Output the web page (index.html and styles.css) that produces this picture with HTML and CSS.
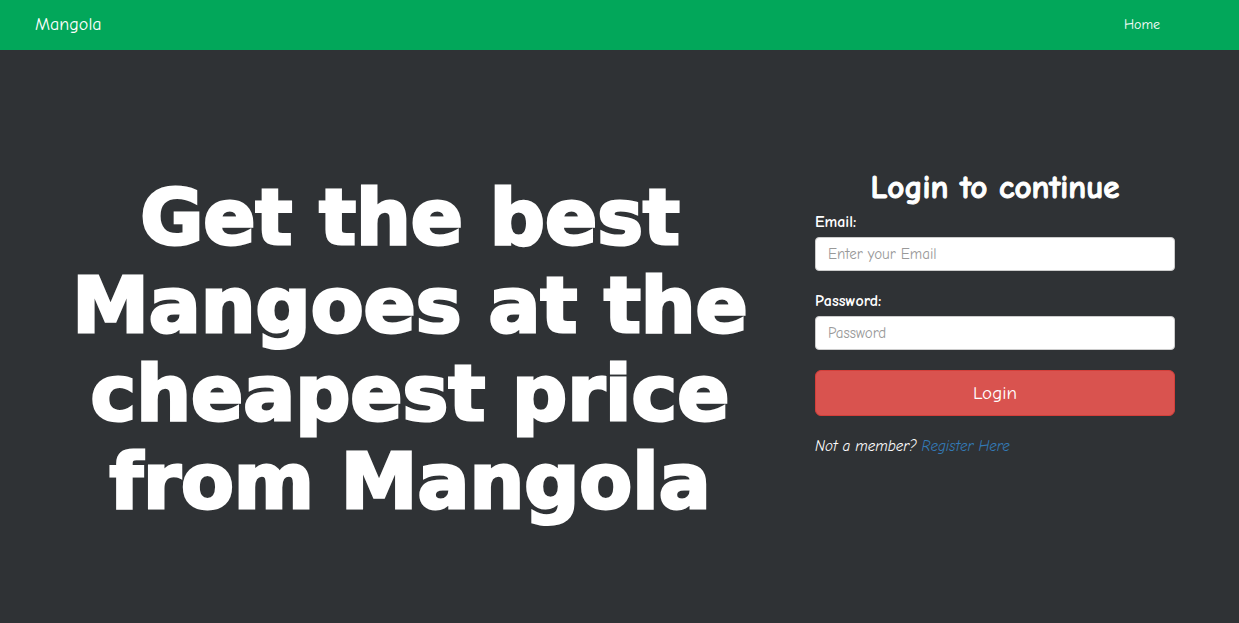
FILE: index.html
```
<!DOCTYPE html>
<html lang="en">
<head>
<meta charset="utf-8">
<meta name="viewport" content="width=device-width, initial-scale=1">
<title>Mangola</title>
<link rel="stylesheet" href="styles.css">
</head>
<body>
<nav class="navbar">
  <a class="brand" href="#">Mangola</a>
  <a class="nav-link" href="#">Home</a>
</nav>
<main class="content">
  <h1 class="headline">Get the best Mangoes at the cheapest price from Mangola</h1>
  <form class="login">
    <h2 class="login-title">Login to continue</h2>
    <div class="field">
      <label for="email">Email:</label>
      <input id="email" type="email" placeholder="Enter your Email">
    </div>
    <div class="field">
      <label for="password">Password:</label>
      <input id="password" type="password" placeholder="Password">
    </div>
    <button class="login-button" type="submit">Login</button>
    <p class="register">Not a member? <a href="#">Register Here</a></p>
  </form>
</main>
</body>
</html>
```
FILE: styles.css
```
* {
  box-sizing: border-box;
}

body {
  margin: 0;
  background: #2f3235;
  color: #fff;
  font: 15px/20px "Comic Sans MS", "Comic Neue", "Noto Sans", sans-serif;
}

.navbar {
  display: flex;
  align-items: center;
  justify-content: space-between;
  height: 50px;
  padding: 0 79px 0 35px;
  background: #02a75a;
}

.brand,
.nav-link {
  color: #fff;
  text-decoration: none;
}

.brand {
  font-size: 18px;
}

.nav-link {
  font-size: 14px;
}

.content {
  display: grid;
  grid-template-columns: 2fr 1fr;
  padding: 120px 49px 0 20px;
}

.headline {
  margin: 0;
  padding: 4px 15px 0;
  font: 900 77px/88px "Arial Black", "DejaVu Sans", sans-serif;
  text-align: center;
  -webkit-text-stroke: 3px #fff;
}

.login {
  padding: 0 15px;
}

.login-title {
  margin: 0 0 8px;
  font-size: 33px;
  line-height: 34px;
  text-align: center;
  -webkit-text-stroke: 1px #fff;
}

.field {
  margin-bottom: 20px;
}

.field label {
  display: block;
  margin-bottom: 5px;
  font-size: 16px;
  font-weight: 700;
}

.field input {
  display: block;
  width: 100%;
  height: 34px;
  padding: 6px 12px;
  border: 1px solid #ccc;
  border-radius: 4px;
  background: #fff;
  color: #555;
  font: inherit;
}

.field input::placeholder {
  color: #999;
}

.login-button {
  display: block;
  width: 100%;
  height: 46px;
  padding: 0;
  border: 1px solid #d43f3a;
  border-radius: 6px;
  background: #d9534f;
  color: #fff;
  font: inherit;
  font-size: 19px;
}

.register {
  margin: 20px 0 0;
  font-style: italic;
}

.register a {
  color: #337ab7;
  text-decoration: none;
}
```
